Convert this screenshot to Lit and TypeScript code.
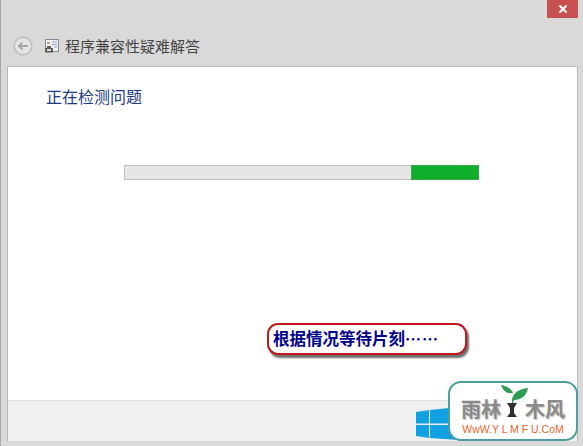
import { LitElement, html, css } from "lit";
import { customElement } from "lit/decorators.js";

@customElement("app-root")
export class AppRoot extends LitElement {
  static styles = css`
    :host {
      display: block;
      width: 583px;
      height: 446px;
      overflow: hidden;
      position: relative;
      font-family: "Noto Sans CJK SC", "Noto Sans", sans-serif;
    }
    .window {
      box-sizing: border-box;
      width: 583px;
      height: 446px;
      background: #d9d9d9;
      border-left: 1px solid #a6a6a6;
      padding: 0 5px 5px 6px;
      display: flex;
      flex-direction: column;
    }
    .top {
      height: 18px;
      display: flex;
      justify-content: flex-end;
    }
    .close {
      width: 31px;
      height: 18px;
      background: #c75050;
      display: flex;
      align-items: center;
      justify-content: center;
    }
    .nav {
      height: 48px;
      display: flex;
      align-items: center;
      margin-left: 6px;
      padding-top: 8px;
      box-sizing: border-box;
    }
    .back {
      display: block;
      margin-right: 11px;
    }
    .doc {
      display: block;
      margin-right: 5px;
    }
    .title {
      font-size: 15px;
      color: #444;
      line-height: 20px;
    }
    .panel {
      flex: 1;
      min-height: 0;
      display: flex;
      flex-direction: column;
      border: solid #b9b9b9;
      border-width: 1px 1px 0 1px;
      background: #fff;
    }
    .content {
      flex: 1;
      padding: 18px 0 0 38px;
    }
    .heading {
      font-size: 16px;
      line-height: 22px;
      color: #1c3d85;
    }
    .bar {
      margin: 58px 0 0 78px;
      width: 355px;
      height: 15px;
      background: #e6e6e6;
      box-shadow: inset 0 0 0 1px #bcbcbc;
      display: flex;
      justify-content: flex-end;
    }
    .fill {
      width: 68px;
      background: #0fae2b;
      box-shadow: inset 0 0 0 1px #3aa850;
    }
    .footer {
      height: 41px;
      box-sizing: border-box;
      background: #f0f0f0;
      border-top: 1px solid #dfdfdf;
      padding: 6px 0 0 408px;
    }
    .winlogo {
      display: block;
    }
    .note {
      position: absolute;
      left: 267px;
      top: 323px;
      width: 200px;
      height: 32px;
      box-sizing: border-box;
      border: 2px solid #c01a1e;
      border-radius: 11px;
      background: #fff;
      box-shadow: 2px 3px 2px #6f6f6f;
      color: #00008c;
      font-family: "Noto Sans CJK SC", sans-serif;
      font-weight: 700;
      font-size: 16.5px;
      line-height: 26px;
      padding-left: 4px;
      white-space: nowrap;
    }
    .dots {
      font-size: 16px;
      letter-spacing: 1px;
    }
    .logo {
      position: absolute;
      left: 448px;
      top: 381px;
      width: 130px;
      height: 60px;
      box-sizing: border-box;
      background: #fff;
      border: 2px solid #4a9f9c;
      border-radius: 13px;
      display: flex;
      flex-direction: column;
      align-items: center;
    }
    .brand {
      display: flex;
      align-items: flex-end;
      height: 38px;
      font-size: 20px;
      font-weight: 700;
      line-height: 24px;
      color: #8a8a8a;
      text-shadow: 1px 1px 1px #bdbdbd;
    }
    .brand span {
      white-space: nowrap;
    }
    .tree {
      display: block;
      width: 30px;
      height: 36px;
      margin: 0 -6px 0 0;
    }
    .url {
      font-family: "Liberation Sans", sans-serif;
      font-size: 10.5px;
      line-height: 13px;
      color: #e5672a;
      white-space: nowrap;
      margin-top: 2px;
    }
  `;

  render() {
    return html`
      <div class="window">
        <div class="top">
          <div class="close">
            <svg width="10" height="10" viewBox="0 0 10 10">
              <path d="M1.5 1.5l7 7M8.5 1.5l-7 7" stroke="#fff" stroke-width="2" fill="none" />
            </svg>
          </div>
        </div>
        <div class="nav">
          <svg class="back" width="20" height="20" viewBox="0 0 20 20">
            <circle cx="10" cy="10" r="8.8" fill="#e4e4e4" stroke="#bcbcbc" stroke-width="1.6" />
            <path d="M15 10H6M9.5 6.500L6 10l3.500 3.500" fill="none" stroke="#a6a6a6" stroke-width="2" />
          </svg>
          <svg class="doc" width="16" height="16" viewBox="0 0 16 16">
            <rect x="1.500" y="1.500" width="13" height="12" fill="#eef2f6" stroke="#7c8a9a" />
            <path d="M8 4h5M8 6.500h5M10 9h3" stroke="#8fa2b8" />
            <path d="M3 4h3v2H3z" fill="#b99f73" />
            <path d="M1 14.500V10h2V8h4v2h2v4.500z" fill="#5c5c50" />
            <path d="M3 11h4v2H3z" fill="#d8d8cc" />
          </svg>
          <div class="title">程序兼容性疑难解答</div>
        </div>
        <div class="panel">
          <div class="content">
            <div class="heading">正在检测问题</div>
            <div class="bar"><div class="fill"></div></div>
          </div>
          <div class="footer">
            <svg class="winlogo" width="43" height="33" viewBox="0 0 43 33">
              <path d="M0 5l13-2v13.500H0zM14 3L43 0v16.500H14zM0 18h13v13L0 29zM14 18h29v15l-29-2z" fill="#11a1e3" />
            </svg>
          </div>
        </div>
      </div>
      <div class="note">根据情况等待片刻<span class="dots">⋯⋯</span></div>
      <div class="logo">
        <div class="brand">
          <span>雨林</span>
          <svg class="tree" viewBox="0 0 30 36">
            <path d="M0 0c5 1 10 3 12 8C6 9 2 6 0 0z" fill="#2e9c55" />
            <path d="M11 18c-1-8 5-14 16-15-1 7-6 12-14 12l-1 3z" fill="#2e9c55" />
            <path d="M6 18h10l-3 5v5l3 4H6l3-4v-5z" fill="#2f2f2f" />
          </svg>
          <span>木风</span>
        </div>
        <div class="url">WwW.Y L M F U.CoM</div>
      </div>
    `;
  }
}
